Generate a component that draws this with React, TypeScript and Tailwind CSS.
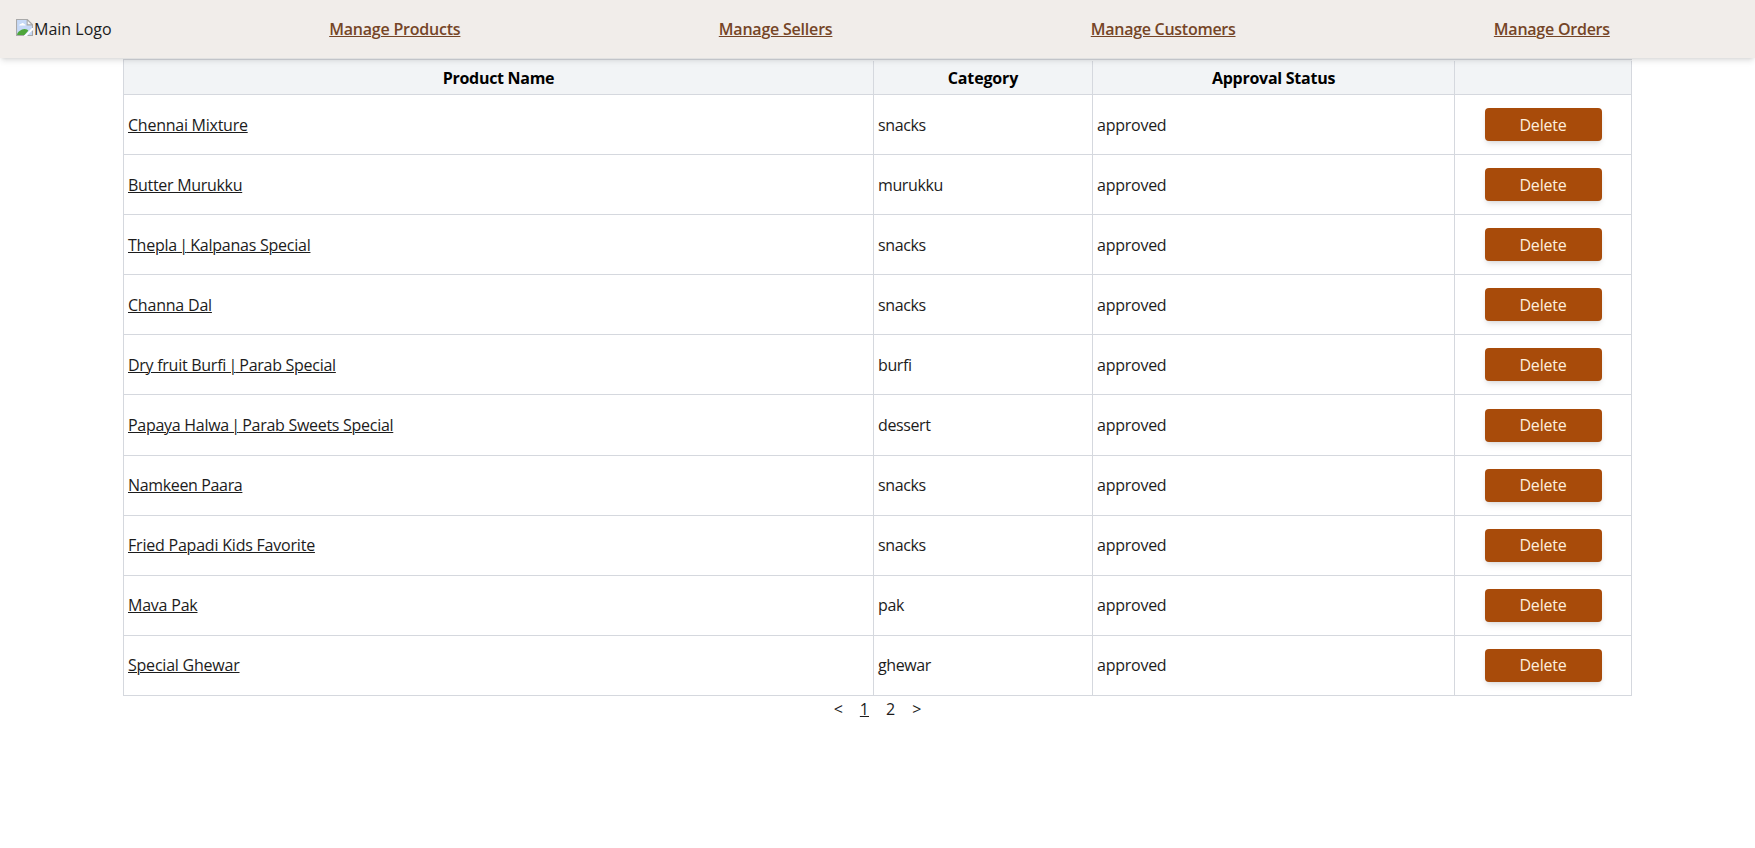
type Product = { name: string; category: string; fit: string };

const links = [
  { label: "Manage Products", fit: "tracking-[-0.21px]" },
  { label: "Manage Sellers", fit: "tracking-[-0.21px]" },
  { label: "Manage Customers", fit: "tracking-[-0.27px]" },
  { label: "Manage Orders", fit: "tracking-[-0.24px]" },
];

const products: Product[] = [
  { name: "Chennai Mixture", category: "snacks", fit: "tracking-[-0.25px]" },
  { name: "Butter Murukku", category: "murukku", fit: "tracking-[-0.3px]" },
  { name: "Thepla | Kalpanas Special", category: "snacks", fit: "tracking-[-0.24px]" },
  { name: "Channa Dal", category: "snacks", fit: "tracking-[-0.21px]" },
  { name: "Dry fruit Burfi | Parab Special", category: "burfi", fit: "tracking-[-0.27px]" },
  { name: "Papaya Halwa | Parab Sweets Special", category: "dessert", fit: "tracking-[-0.28px]" },
  { name: "Namkeen Paara", category: "snacks", fit: "tracking-[-0.35px]" },
  { name: "Fried Papadi Kids Favorite", category: "snacks", fit: "tracking-[-0.21px]" },
  { name: "Mava Pak", category: "pak", fit: "tracking-[-0.22px]" },
  { name: "Special Ghewar", category: "ghewar", fit: "tracking-[-0.22px]" },
];

const columns = "grid grid-cols-[750px_219px_362px_177px]";

function BrokenImage() {
  return (
    <svg width="17" height="17" viewBox="0 0 16 16" className="-mt-1 shrink-0">
      <path d="M.5.5h10l5 5v10H.5z" fill="#c6d9f7" />
      <path d="M3 6.2c0-1.2 1-1.7 1.8-1.5.5-1.2 2.3-1.2 2.8.1 1 0 1.4.7 1.4 1.4z" fill="#fff" />
      <path d="M1 15c0-2.500 4-5.500 7-5.500 2 0 3 1 3.500 1.500L8 15z" fill="#4ea63a" />
      <path d="M7.500 16 16 7.500V10l-6 6z" fill="#fff" />
      <path d="M7.500 15.500H.5V.5h10l5 5v3M11 15.500h4.500V11" fill="none" stroke="#a9a9a9" />
      <path d="M10.500.5v5h5z" fill="#f6f6f6" stroke="#a9a9a9" />
    </svg>
  );
}

function ProductName({ name }: { name: string }) {
  const [first, second] = name.split("|");
  if (!second) return <>{name}</>;
  return (
    <>
      {first}
      <span className="-ml-[1.5px] tracking-[-1.8px]">|</span>
      {second}
    </>
  );
}

export default function App() {
  return (
    <div className="min-h-[848px] bg-white font-['Open_Sans',sans-serif] text-[16px] leading-6 text-[#1c1c1c]">
      <header className="relative z-10 flex h-[58px] items-center bg-[#f1edea] pl-4 shadow-md">
        <div className="flex w-[184px] items-center gap-px">
          <BrokenImage />
          <span>Main Logo</span>
        </div>
        <nav className="mr-4 flex flex-1 justify-around">
          {links.map((l) => (
            <a key={l.label} className={`font-semibold text-[#754527] underline decoration-1 underline-offset-1 ${l.fit}`}>
              {l.label}
            </a>
          ))}
        </nav>
      </header>

      <main className="ml-[123px] w-[1509px] pt-px">
        <div className="border-t border-l border-[#d5d8de]">
          <div className={`${columns} h-[35px] border-b border-[#d5d8de] bg-[#f2f4f6] pt-px text-center font-bold text-black`}>
            <div className="flex items-center justify-center border-r border-[#d5d8de] tracking-[-0.3px]">Product Name</div>
            <div className="flex items-center justify-center border-r border-[#d5d8de] tracking-[-0.15px]">Category</div>
            <div className="flex items-center justify-center border-r border-[#d5d8de] tracking-[-0.26px]">Approval Status</div>
            <div className="border-r border-[#d5d8de]" />
          </div>
          {products.map((p) => (
            <div key={p.name} className={`${columns} h-[60.1px] border-b border-[#d5d8de]`}>
              <div className="flex items-center border-r border-[#d5d8de] pl-1">
                <a className={`whitespace-pre underline decoration-1 underline-offset-1 ${p.fit}`}>
                  <ProductName name={p.name} />
                </a>
              </div>
              <div className="flex items-center border-r border-[#d5d8de] pl-1 tracking-[-0.38px]">{p.category}</div>
              <div className="flex items-center border-r border-[#d5d8de] pl-1 tracking-[-0.25px]">approved</div>
              <div className="flex items-center justify-center border-r border-[#d5d8de]">
                <button className="h-[33px] w-[117px] rounded bg-[#a84b0a] tracking-[-0.2px] text-[#fdeedd] shadow-md">Delete</button>
              </div>
            </div>
          ))}
        </div>
        <div className="mt-px flex justify-center gap-[17px]">
          <span>&lt;</span>
          <span className="underline decoration-1 underline-offset-1">1</span>
          <span>2</span>
          <span>&gt;</span>
        </div>
      </main>
    </div>
  );
}
